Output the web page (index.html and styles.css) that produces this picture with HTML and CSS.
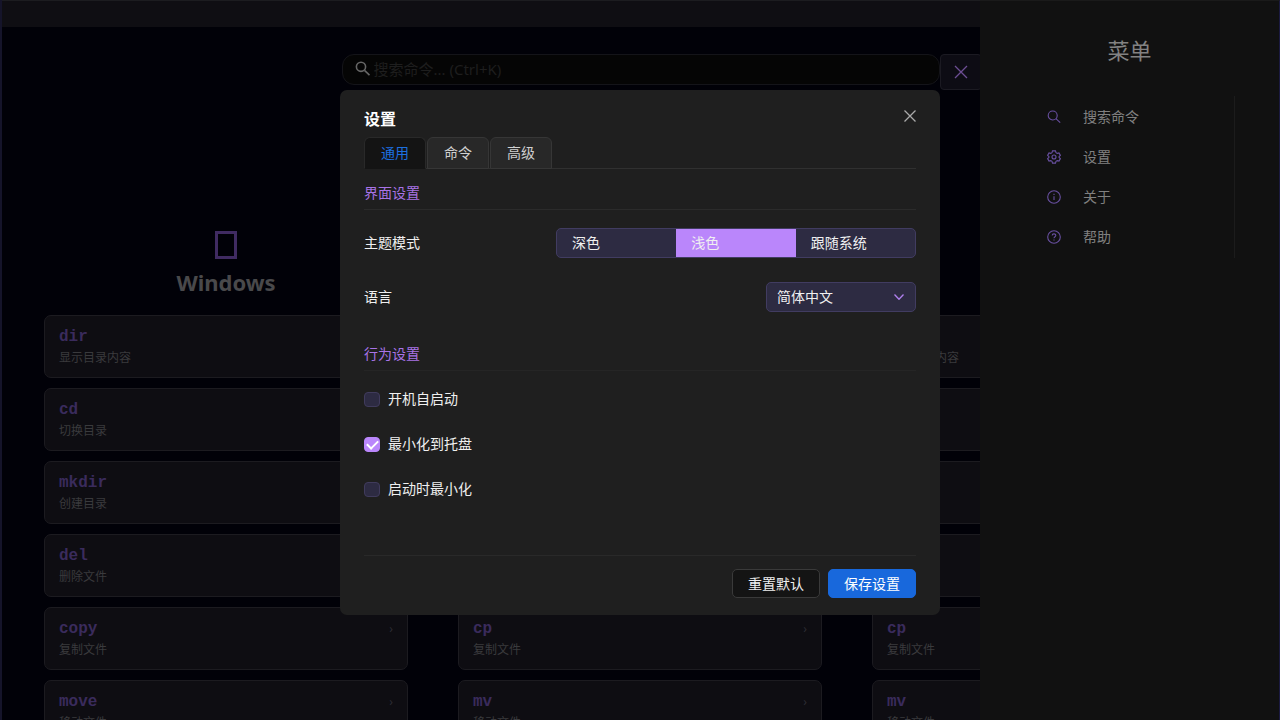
FILE: index.html
```html
<!DOCTYPE html>
<html lang="zh-CN">
    <head>
        <meta charset="UTF-8" />
        <meta name="viewport" content="width=device-width, initial-scale=1.0" />
        <title>命令速查</title>
        <link rel="stylesheet" href="styles.css">
    </head>
    <body>
        <div class="app">
            <div class="titlebar"></div>
            <!-- 搜索栏 -->
            <div class="top">
                <label class="search">
                    <svg viewBox="0 0 16 16" width="16" height="16">
                        <circle cx="6" cy="5.8" r="4.6" />
                        <path d="M9.5 9.3L14.5 14.1" />
                    </svg>
                    <input type="text" placeholder="搜索命令... (Ctrl+K)" aria-label="搜索命令" />
                </label>
                <button class="menu-btn" type="button" aria-label="关闭菜单">
                    <svg viewBox="0 0 14 14" width="14" height="14"><path d="M1 1L13 13M13 1L1 13" /></svg>
                </button>
            </div>
            <!-- 命令列表 -->
            <div class="columns">
                <div class="column">
                    <div class="system"><i class="logo"></i><h2>Windows</h2></div>
                    <div class="card"><div><code>dir</code><p>显示目录内容</p></div><span>›</span></div>
                    <div class="card"><div><code>cd</code><p>切换目录</p></div><span>›</span></div>
                    <div class="card"><div><code>mkdir</code><p>创建目录</p></div><span>›</span></div>
                    <div class="card"><div><code>del</code><p>删除文件</p></div><span>›</span></div>
                    <div class="card"><div><code>copy</code><p>复制文件</p></div><span>›</span></div>
                    <div class="card"><div><code>move</code><p>移动文件</p></div><span>›</span></div>
                </div>
                <div class="column">
                    <div class="system"><i class="logo"></i><h2>macOS</h2></div>
                    <div class="card"><div><code>ls</code><p>显示目录内容</p></div><span>›</span></div>
                    <div class="card"><div><code>cd</code><p>切换目录</p></div><span>›</span></div>
                    <div class="card"><div><code>mkdir</code><p>创建目录</p></div><span>›</span></div>
                    <div class="card"><div><code>rm</code><p>删除文件</p></div><span>›</span></div>
                    <div class="card"><div><code>cp</code><p>复制文件</p></div><span>›</span></div>
                    <div class="card"><div><code>mv</code><p>移动文件</p></div><span>›</span></div>
                </div>
                <div class="column">
                    <div class="system"><i class="logo"></i><h2>Linux</h2></div>
                    <div class="card"><div><code>ls</code><p>显示目录内容</p></div><span>›</span></div>
                    <div class="card"><div><code>cd</code><p>切换目录</p></div><span>›</span></div>
                    <div class="card"><div><code>mkdir</code><p>创建目录</p></div><span>›</span></div>
                    <div class="card"><div><code>rm</code><p>删除文件</p></div><span>›</span></div>
                    <div class="card"><div><code>cp</code><p>复制文件</p></div><span>›</span></div>
                    <div class="card"><div><code>mv</code><p>移动文件</p></div><span>›</span></div>
                </div>
            </div>
        </div>

        <!-- 侧边菜单 -->
        <div class="drawer">
            <h2>菜单</h2>
            <ul>
                <li><a href="#">
                    <svg viewBox="0 0 14 14" width="14" height="14"><circle cx="5.7" cy="5.5" r="4.5" /><path d="M8.9 8.7L13.2 12.6" /></svg>
                    搜索命令
                </a></li>
                <li><a href="#">
                    <svg viewBox="0 0 14 14" width="14" height="14"><path d="M5.5 0.9H8.5L9 2.7L10.2 3.4L12 2.9L13.4 5.4L12.1 6.5V7.5L13.4 8.6L12 11.1L10.2 10.6L9 11.3L8.5 13.1H5.5L5 11.3L3.8 10.6L2 11.1L0.6 8.6L1.9 7.5V6.5L0.6 5.4L2 2.9L3.8 3.4L5 2.7Z" /><circle cx="7" cy="7" r="2" /></svg>
                    设置
                </a></li>
                <li><a href="#">
                    <svg viewBox="0 0 14 14" width="14" height="14"><circle cx="7" cy="7" r="6.3" /><path d="M7 6.2V10M7 3.8V4.9" /></svg>
                    关于
                </a></li>
                <li><a href="#">
                    <svg viewBox="0 0 14 14" width="14" height="14"><circle cx="7" cy="7" r="6.3" /><path d="M5.2 5.6C5.2 3.3 8.8 3.3 8.8 5.5C8.8 6.7 7 6.8 7 8.3M7 9.4V10.4" /></svg>
                    帮助
                </a></li>
            </ul>
        </div>

        <!-- 设置弹窗 -->
        <div class="modal" role="dialog" aria-labelledby="title">
            <div class="modal-head">
                <h1 id="title">设置</h1>
                <button class="close" type="button" aria-label="关闭">
                    <svg viewBox="0 0 12 12" width="12" height="12"><path d="M0.5 0.5L11.5 11.5M11.5 0.5L0.5 11.5" /></svg>
                </button>
            </div>
            <div class="tabs">
                <button class="active" type="button">通用</button>
                <button type="button">命令</button>
                <button type="button">高级</button>
            </div>
            <div class="modal-body">
                <h3>界面设置</h3>
                <div class="row">
                    <span>主题模式</span>
                    <div class="segment">
                        <label><input type="radio" name="theme" />深色</label>
                        <label><input type="radio" name="theme" checked />浅色</label>
                        <label><input type="radio" name="theme" />跟随系统</label>
                    </div>
                </div>
                <div class="row">
                    <label for="lang">语言</label>
                    <div class="select">
                        <select id="lang">
                            <option>简体中文</option>
                            <option>English</option>
                        </select>
                        <svg viewBox="0 0 10 6" width="10" height="6"><path d="M0.5 0.5L5 5.3L9.5 0.5" /></svg>
                    </div>
                </div>
                <h3 class="second">行为设置</h3>
                <label class="check"><input type="checkbox" />开机自启动</label>
                <label class="check"><input type="checkbox" checked />最小化到托盘</label>
                <label class="check"><input type="checkbox" />启动时最小化</label>
            </div>
            <div class="modal-foot">
                <button type="button">重置默认</button>
                <button class="save" type="button">保存设置</button>
            </div>
        </div>
    </body>
</html>
```
FILE: styles.css
```css
* {
    margin: 0;
    padding: 0;
    box-sizing: border-box;
}
body {
    height: 100vh;
    overflow: hidden;
    background-color: #010108;
    color: #f0f0f0;
    font: 14px/20px "Noto Sans", "Noto Sans CJK SC", sans-serif;
}
button,
input,
select {
    font: inherit;
    color: inherit;
}
svg {
    fill: none;
    stroke: currentColor;
    flex: none;
}
.app {
    height: 100vh;
    overflow: hidden;
    border-left: 2px solid #15142a;
    border-right: 1px solid #1b1a40;
}
.titlebar {
    height: 27px;
    background-color: #0f0e13;
    border-top: 1px solid #1c1c20;
}
.top {
    display: grid;
    grid-template-columns: 1fr 598px 1fr;
    padding-top: 27px;
}
.search {
    grid-column: 2;
    display: flex;
    align-items: center;
    height: 31px;
    padding: 0 12px 2px;
    gap: 3px;
    background-color: #050505;
    border: 1px solid #141419;
    border-radius: 12px;
    color: #666;
}
.search svg {
    stroke-width: 1.6;
}
.search input {
    flex: 1;
    min-width: 0;
    background: none;
    border: none;
    outline: none;
    font-size: 15px;
}
.search input::placeholder {
    color: #1e1e1e;
}
.menu-btn {
    width: 42px;
    height: 36px;
    background-color: #0d0c14;
    border: 1px solid #1b1a22;
    border-radius: 4px;
    color: #6d4e94;
}
.menu-btn svg {
    display: block;
    margin: auto;
    stroke-width: 1.3;
}

.columns {
    display: grid;
    grid-template-columns: repeat(3, 1fr);
    gap: 50px;
    padding: 141px 43px 0 42px;
}
.column {
    display: flex;
    flex-direction: column;
    gap: 10px;
}
.system {
    display: flex;
    flex-direction: column;
    align-items: center;
    gap: 8px;
    height: 74px;
}
.logo {
    width: 22px;
    height: 28px;
    border: 3px solid #402b62;
}
.system h2 {
    color: #49494b;
    font-size: 22px;
    line-height: 30px;
}
.card {
    display: flex;
    justify-content: space-between;
    height: 63px;
    padding: 11px 14px;
    background-color: #0e0d12;
    border: 1px solid #1c1b20;
    border-radius: 7px;
}
.card code {
    display: block;
    color: #3a2b5c;
    font: bold 16px/20px "Courier New", "Liberation Mono", monospace;
}
.card p {
    color: #3a3a3d;
    font-size: 12px;
    line-height: 22px;
}
.card span {
    color: #2c2c33;
    font-size: 12px;
    line-height: 20px;
}

.drawer {
    position: fixed;
    top: 0;
    right: 0;
    bottom: 0;
    width: 300px;
    padding: 33px 44px;
    background-color: #111;
    border-top: 1px solid #1a1a1a;
    border-right: 1px solid #1b1a40;
}
.drawer h2 {
    color: #828282;
    font-size: 22px;
    font-weight: normal;
    line-height: 32px;
    text-align: center;
}
.drawer ul {
    margin-top: 30px;
    padding: 1px 0;
    border-right: 1px solid #1c1c1c;
    list-style: none;
}
.drawer a {
    display: flex;
    align-items: center;
    gap: 22px;
    height: 40px;
    padding-left: 23px;
    color: #808080;
    text-decoration: none;
}
.drawer svg {
    color: #6950a2;
    stroke-width: 1.1;
}

.modal {
    position: fixed;
    top: 90px;
    left: 50%;
    width: 600px;
    padding: 17px 24px;
    transform: translateX(-50%);
    background-color: #1f1f1f;
    border-radius: 7px;
}
.modal-head {
    display: flex;
    justify-content: space-between;
    height: 30px;
}
.modal-head h1 {
    color: #fff;
    font-size: 16px;
    line-height: 24px;
}
.close {
    display: flex;
    align-items: center;
    height: 18px;
    background: none;
    border: none;
    color: #aaa;
}
.close svg {
    stroke-width: 1.3;
}
.tabs {
    display: flex;
    gap: 1px;
    border-bottom: 1px solid #303030;
}
.tabs button {
    height: 32px;
    margin-bottom: -1px;
    padding: 0 16px;
    background-color: #282828;
    border: 1px solid #363636;
    border-radius: 6px 6px 0 0;
    color: #d0d0d0;
}
.tabs .active {
    background-color: #141414;
    border-color: #292929;
    border-bottom-color: #141414;
    color: #1c70e0;
}
.modal h3 {
    height: 41px;
    padding-top: 14px;
    border-bottom: 1px solid #2b2b2b;
    color: #a873e6;
    font-size: 14px;
    font-weight: normal;
}
.modal-body {
    padding-bottom: 56px;
}
.row {
    display: flex;
    align-items: center;
    justify-content: space-between;
    height: 30px;
    margin-top: 18px;
}
.row + .row {
    margin-top: 24px;
}
.segment {
    display: flex;
    width: 360px;
    height: 30px;
    overflow: hidden;
    background-color: #2d2b42;
    border: 1px solid #413c61;
    border-radius: 5px;
}
.segment label {
    flex: 1;
    padding-left: 15px;
    line-height: 28px;
}
.segment label:has(:checked) {
    background-color: #ba86fb;
}
.segment input {
    position: absolute;
    opacity: 0;
}
.select {
    position: relative;
    width: 150px;
}
.select select {
    display: block;
    width: 100%;
    height: 30px;
    padding: 0 10px;
    background-color: #2d2b42;
    border: 1px solid #413c61;
    border-radius: 5px;
    appearance: none;
}
.select svg {
    position: absolute;
    top: 12px;
    right: 12px;
    color: #b080ee;
    stroke-width: 1.3;
}
.modal .second {
    margin-top: 18px;
    border-bottom-color: #252525;
}
.check {
    display: flex;
    align-items: center;
    gap: 8px;
    height: 20px;
    margin-top: 25px;
}
.modal .second + .check {
    margin-top: 18px;
}
.check input {
    display: grid;
    place-items: center;
    width: 16px;
    height: 15px;
    background-color: #2d2b42;
    border: 1px solid #403b5c;
    border-radius: 4px;
    appearance: none;
}
.check input:checked {
    background-color: #ba86fb;
    border-color: #ba86fb;
}
.check input:checked::after {
    content: "";
    width: 5px;
    height: 9px;
    margin-bottom: 3px;
    border: solid #fff;
    border-width: 0 2px 2px 0;
    transform: rotate(45deg);
}
.modal-foot {
    display: flex;
    justify-content: flex-end;
    gap: 8px;
    padding-top: 13px;
    border-top: 1px solid #292929;
}
.modal-foot button {
    width: 88px;
    height: 29px;
    background-color: #141414;
    border: 1px solid #3a3a3a;
    border-radius: 5px;
}
.modal-foot .save {
    background-color: #1868dc;
    border-color: #1868dc;
    color: #fff;
}
```
